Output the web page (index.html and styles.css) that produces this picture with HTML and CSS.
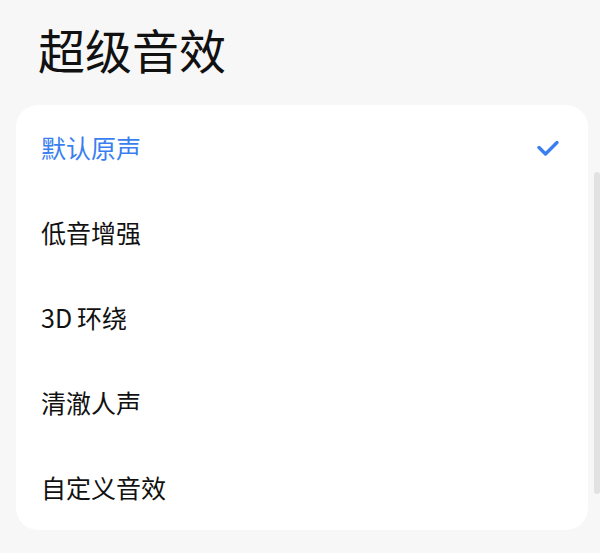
FILE: index.html
```html
<!DOCTYPE html>
<html lang="zh">
<head>
<meta charset="utf-8">
<link rel="stylesheet" href="styles.css">
</head>
<body>
<div class="page">
  <h1 class="title">超级音效</h1>
  <div class="card">
    <div class="row active">
      <span class="label">默认原声</span>
      <svg class="check" width="24" height="20" viewBox="0 0 24 20"><path d="M3 9.5 L9.5 16 L21 4.5" fill="none" stroke="#3a7ff0" stroke-width="3.4" stroke-linecap="round" stroke-linejoin="round"/></svg>
    </div>
    <div class="row"><span class="label">低音增强</span></div>
    <div class="row"><span class="label">3D<span class="gap"></span>环绕</span></div>
    <div class="row"><span class="label">清澈人声</span></div>
    <div class="row"><span class="label">自定义音效</span></div>
  </div>
  <div class="scrollbar"></div>
</div>
</body>
</html>
```

FILE: styles.css
```css
html, body {
  margin: 0;
  padding: 0;
  background: #f7f7f7;
  width: 600px;
  height: 553px;
  overflow: hidden;
}
.page {
  position: relative;
  padding: 0 12px 0 16px;
  font-family: "Noto Sans CJK SC", "Noto Sans", sans-serif;
}
.title {
  margin: 0;
  padding: 20px 0 0 22px;
  height: 105px;
  box-sizing: border-box;
  font-size: 47px;
  font-weight: 400;
  line-height: 58px;
  color: #111;
}
.card {
  background: #fff;
  border-radius: 22px;
  width: 572px;
}
.row {
  height: 85px;
  display: flex;
  align-items: center;
  justify-content: space-between;
  padding: 0 28px 0 25px;
}
.label {
  font-size: 25px;
  color: #111;
  line-height: 1;
}
.gap {
  display: inline-block;
  width: 5px;
}
.row.active .label {
  color: #3a7ff0;
}
.check {
  display: block;
}
.scrollbar {
  position: absolute;
  right: 0;
  top: 172px;
  width: 6px;
  height: 322px;
  border-radius: 3px;
  background: #e2e2e2;
}
```
